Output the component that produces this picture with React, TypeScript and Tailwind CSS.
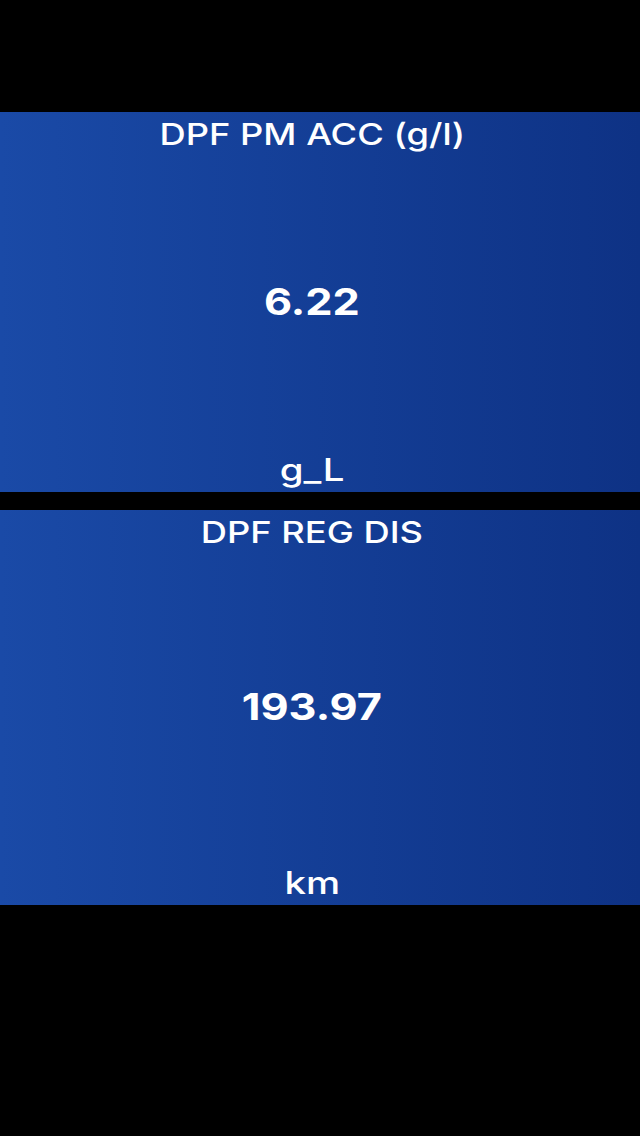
import React from 'react'

type Reading = {
  title: string
  value: string
  unit: string
  height: string
}

const readings: Reading[] = [
  { title: 'DPF PM ACC (g/l)', value: '6.22', unit: 'g_L', height: 'h-[380px]' },
  { title: 'DPF REG DIS', value: '193.97', unit: 'km', height: 'h-[395px]' },
]

const Gauge = ({ title, value, unit, height }: Reading) => {
  return (
    <section className={`${height} flex flex-col items-center pr-4 bg-linear-to-r from-[#1a4aa7] to-[#0e3285] text-white`}>
      <h2 className="pt-[2px] text-[30px] font-medium leading-[40px] scale-x-[1.21]">{title}</h2>
      <div className="flex flex-1 items-center">
        <span className="text-[37px] font-bold leading-none scale-x-[1.17]">{value}</span>
      </div>
      <span className="text-[31px] font-medium leading-[44px] scale-x-[1.24]">{unit}</span>
    </section>
  )
}

const App = () => {
  return (
    <main className="min-h-[1136px] bg-black pt-[112px] font-['Inter','Liberation_Sans',sans-serif]">
      <div className="flex flex-col gap-[18px]">
        {readings.map((r) => (
          <Gauge key={r.title} {...r} />
        ))}
      </div>
    </main>
  )
}

export default App
